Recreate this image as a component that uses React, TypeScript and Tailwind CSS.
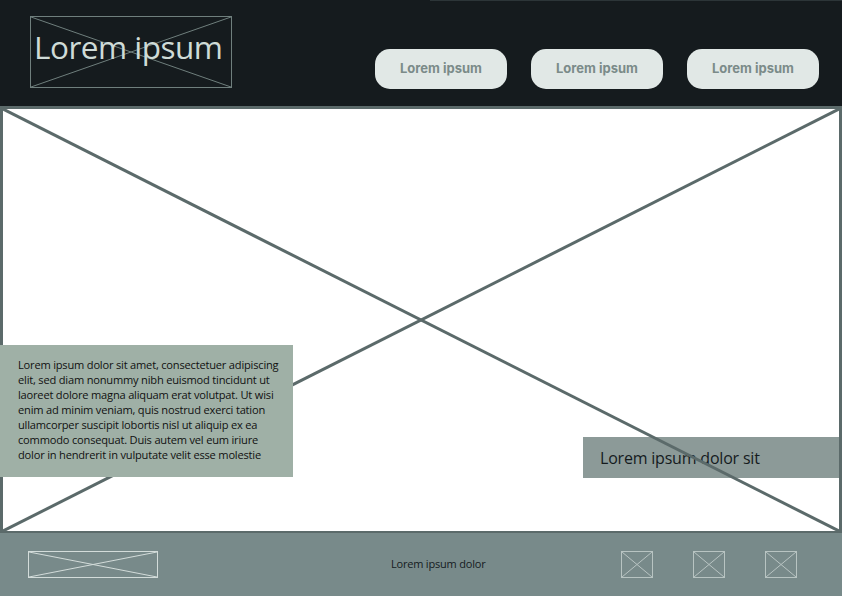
import React from "react";

function CrossBox({
  className,
  stroke,
  width = 1,
}: {
  className?: string;
  stroke: string;
  width?: number;
}) {
  return (
    <svg
      className={className}
      viewBox="0 0 100 100"
      preserveAspectRatio="none"
      fill="none"
    >
      <line x1="0" y1="0" x2="100" y2="100" stroke={stroke} strokeWidth={width} vectorEffect="non-scaling-stroke" />
      <line x1="100" y1="0" x2="0" y2="100" stroke={stroke} strokeWidth={width} vectorEffect="non-scaling-stroke" />
    </svg>
  );
}

const navItems = ["Lorem ipsum", "Lorem ipsum", "Lorem ipsum"];

const bodyLines = [
  "Lorem ipsum dolor sit amet, consectetuer adipiscing",
  "elit, sed diam nonummy nibh euismod tincidunt ut",
  "laoreet dolore magna aliquam erat volutpat. Ut wisi",
  "enim ad minim veniam, quis nostrud exerci tation",
  "ullamcorper suscipit lobortis nisl ut aliquip ex ea",
  "commodo consequat. Duis autem vel eum iriure",
  "dolor in hendrerit in vulputate velit esse molestie",
];

export default function App() {
  return (
    <div className="flex h-[596px] w-[842px] flex-col overflow-hidden bg-white font-['Open_Sans',sans-serif]">
      {/* header */}
      <header className="flex h-[106px] shrink-0 flex-col bg-[#151b1e]">
        <div className="ml-[430px] h-px bg-[#2c3538]" />
        <div className="flex items-start">
          <div className="relative ml-[30px] mt-[15px] h-[72px] w-[202px] border border-[#6f7f7d]">
            <CrossBox className="absolute inset-0 h-full w-full" stroke="#6f7f7d" />
            <span className="relative block pl-[3px] pt-[10px] text-[31.5px] leading-[40px] tracking-[-0.5px] text-[#cfdbd7]">
              Lorem ipsum
            </span>
          </div>
          <nav className="ml-auto mr-[23px] mt-[48px] flex gap-[24px]">
            {navItems.map((t, i) => (
              <button
                key={i}
                type="button"
                className="h-[40px] w-[132px] rounded-[15px] bg-[#e1e8e6] font-['Inter',sans-serif] text-[13px] font-bold text-[#7b8b89]"
              >
                {t}
              </button>
            ))}
          </nav>
        </div>
      </header>

      {/* hero placeholder */}
      <main className="relative h-[427px] shrink-0 border-x-[3px] border-b-2 border-t-[3px] border-[#5b6a6a] bg-white">
        <div className="absolute right-0 top-[328px] flex h-[41px] w-[256px] items-center bg-[#8c9a98] pl-[17px] text-[16px] tracking-[-0.2px] text-[#151b1e]">
          Lorem ipsum dolor sit
        </div>
        <CrossBox className="absolute inset-0 h-full w-full" stroke="#5b6a6a" width={3} />
        <div className="absolute -left-[3px] top-[236px] h-[132px] w-[293px] bg-[#9fb0a6] pl-[18px] pt-[12px] text-[11.1px] leading-[15px] tracking-[-0.2px] text-[#111]">
          {bodyLines.map((l, i) => (
            <div key={i} className="whitespace-nowrap">
              {l}
            </div>
          ))}
        </div>
      </main>

      {/* footer */}
      <footer className="flex flex-1 items-center bg-[#788a8a]">
        <CrossBox className="ml-[28px] h-[27px] w-[130px] border border-[#d3dcda]" stroke="#d3dcda" />
        <span className="ml-[233px] text-[11px] tracking-[-0.2px] text-[#151b1e]">Lorem ipsum dolor</span>
        <div className="ml-auto mr-[45px] flex gap-[40px]">
          {[0, 1, 2].map((i) => (
            <CrossBox key={i} className="h-[27px] w-[32px] border border-[#b8c4c2]" stroke="#b8c4c2" />
          ))}
        </div>
      </footer>
    </div>
  );
}
